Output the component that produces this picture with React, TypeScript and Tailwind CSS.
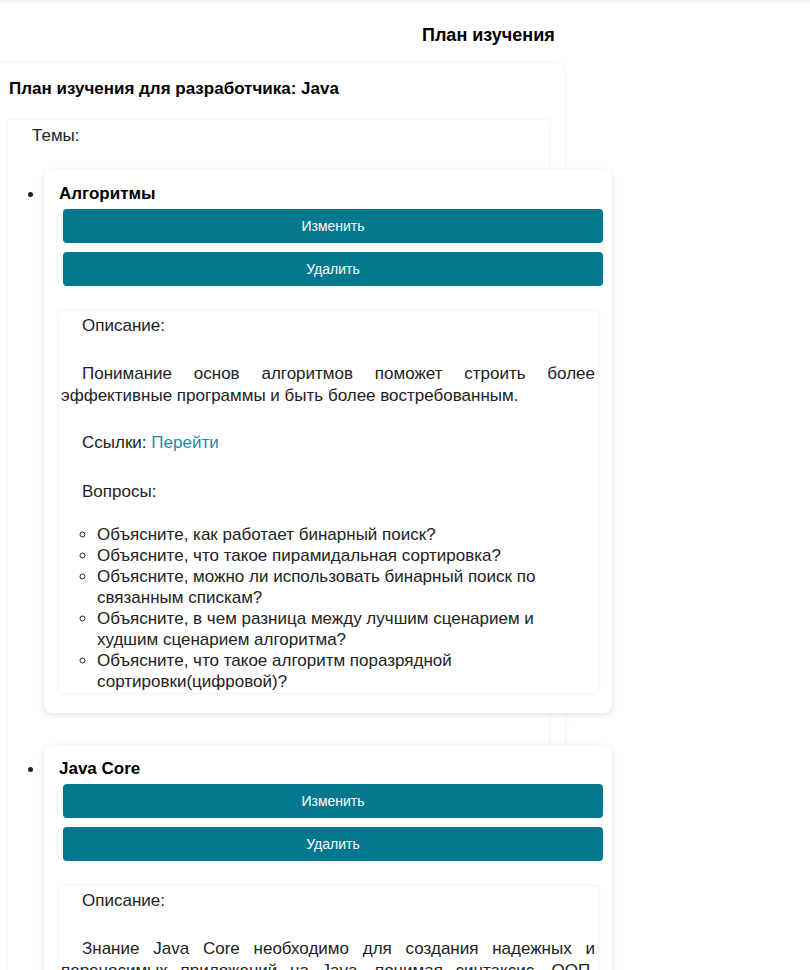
const topics = [
  {
    title: "Алгоритмы",
    description:
      "Понимание основ алгоритмов поможет строить более эффективные программы и быть более востребованным.",
    questions: [
      "Объясните, как работает бинарный поиск?",
      "Объясните, что такое пирамидальная сортировка?",
      "Объясните, можно ли использовать бинарный поиск по связанным спискам?",
      "Объясните, в чем разница между лучшим сценарием и худшим сценарием алгоритма?",
      "Объясните, что такое алгоритм поразрядной сортировки(цифровой)?",
    ],
  },
  {
    title: "Java Core",
    description:
      "Знание Java Core необходимо для создания надежных и переносимых приложений на Java, понимая синтаксис, ООП, коллекции, исключения и многопоточность.",
    questions: [
      "Объясните, что такое JVM, JRE и JDK?",
      "Объясните, чем отличается интерфейс от абстрактного класса?",
    ],
  },
];

const TopicCard = ({ title, description, questions }: (typeof topics)[number]) => {
  return (
    <li className="mb-[32px]">
      <div className="w-[568px] rounded-lg bg-white pl-[15px] pr-[14px] pt-[12px] pb-[20px] shadow-[0_2px_6px_rgba(0,0,0,0.12)]">
        <h3 className="text-[17px] leading-6 font-bold text-black">{title}</h3>
        <button className="mt-[3px] ml-[4px] flex h-[34px] w-[540px] items-center justify-center rounded bg-[#02788f] text-sm text-white">
          Изменить
        </button>
        <button className="mt-[9px] ml-[4px] flex h-[34px] w-[540px] items-center justify-center rounded bg-[#02788f] text-sm text-white">
          Удалить
        </button>

        <div className="mt-[25px] h-[382px] overflow-hidden bg-white pl-[2px] pr-[3px] pt-[4px] text-[17px] shadow-[0_0_4px_rgba(0,0,0,0.08)]">
          <p className="indent-[21px] leading-[22px]">Описание:</p>
          <p className="mt-[26px] indent-[21px] text-justify leading-[22px]">{description}</p>
          <p className="mt-[25px] indent-[21px] leading-[22px]">
            Ссылки: <a className="text-[#1f8a9c]">Перейти</a>
          </p>
          <p className="mt-[27px] indent-[21px] leading-[22px]">Вопросы:</p>
          <ul className="mt-[21px] list-[circle] pl-[36px] pr-[40px] leading-[21px]">
            {questions.map((q) => (
              <li key={q}>{q}</li>
            ))}
          </ul>
        </div>
      </div>
    </li>
  );
};

const App = () => {
  return (
    <div className="min-h-screen overflow-hidden bg-white font-['Liberation_Sans',Arial,sans-serif] text-[#222]">
      <div className="h-px bg-gray-100 shadow-[0_1px_3px_rgba(0,0,0,0.12)]"></div>

      <h1 className="pt-[20px] pl-[422px] text-lg leading-7 font-bold text-black">План изучения</h1>

      <div className="mt-[14px] w-[565px] rounded-tr-lg bg-white pl-[8px] pr-[16px] pt-[14px] shadow-[0_0_4px_rgba(0,0,0,0.08)]">
        <h2 className="pl-px text-[17px] leading-6 font-bold text-black">План изучения для разработчика: Java</h2>

        <div className="mt-[19px] w-[541px] bg-white pt-[4px] shadow-[0_0_4px_rgba(0,0,0,0.08)]">
          <p className="pl-[24px] text-[17px] leading-6">Темы:</p>
          <ul className="mt-[22px] list-disc pl-[36px]">
            {topics.map((t) => (
              <TopicCard key={t.title} {...t} />
            ))}
          </ul>
        </div>
      </div>
    </div>
  );
};

export default App;
